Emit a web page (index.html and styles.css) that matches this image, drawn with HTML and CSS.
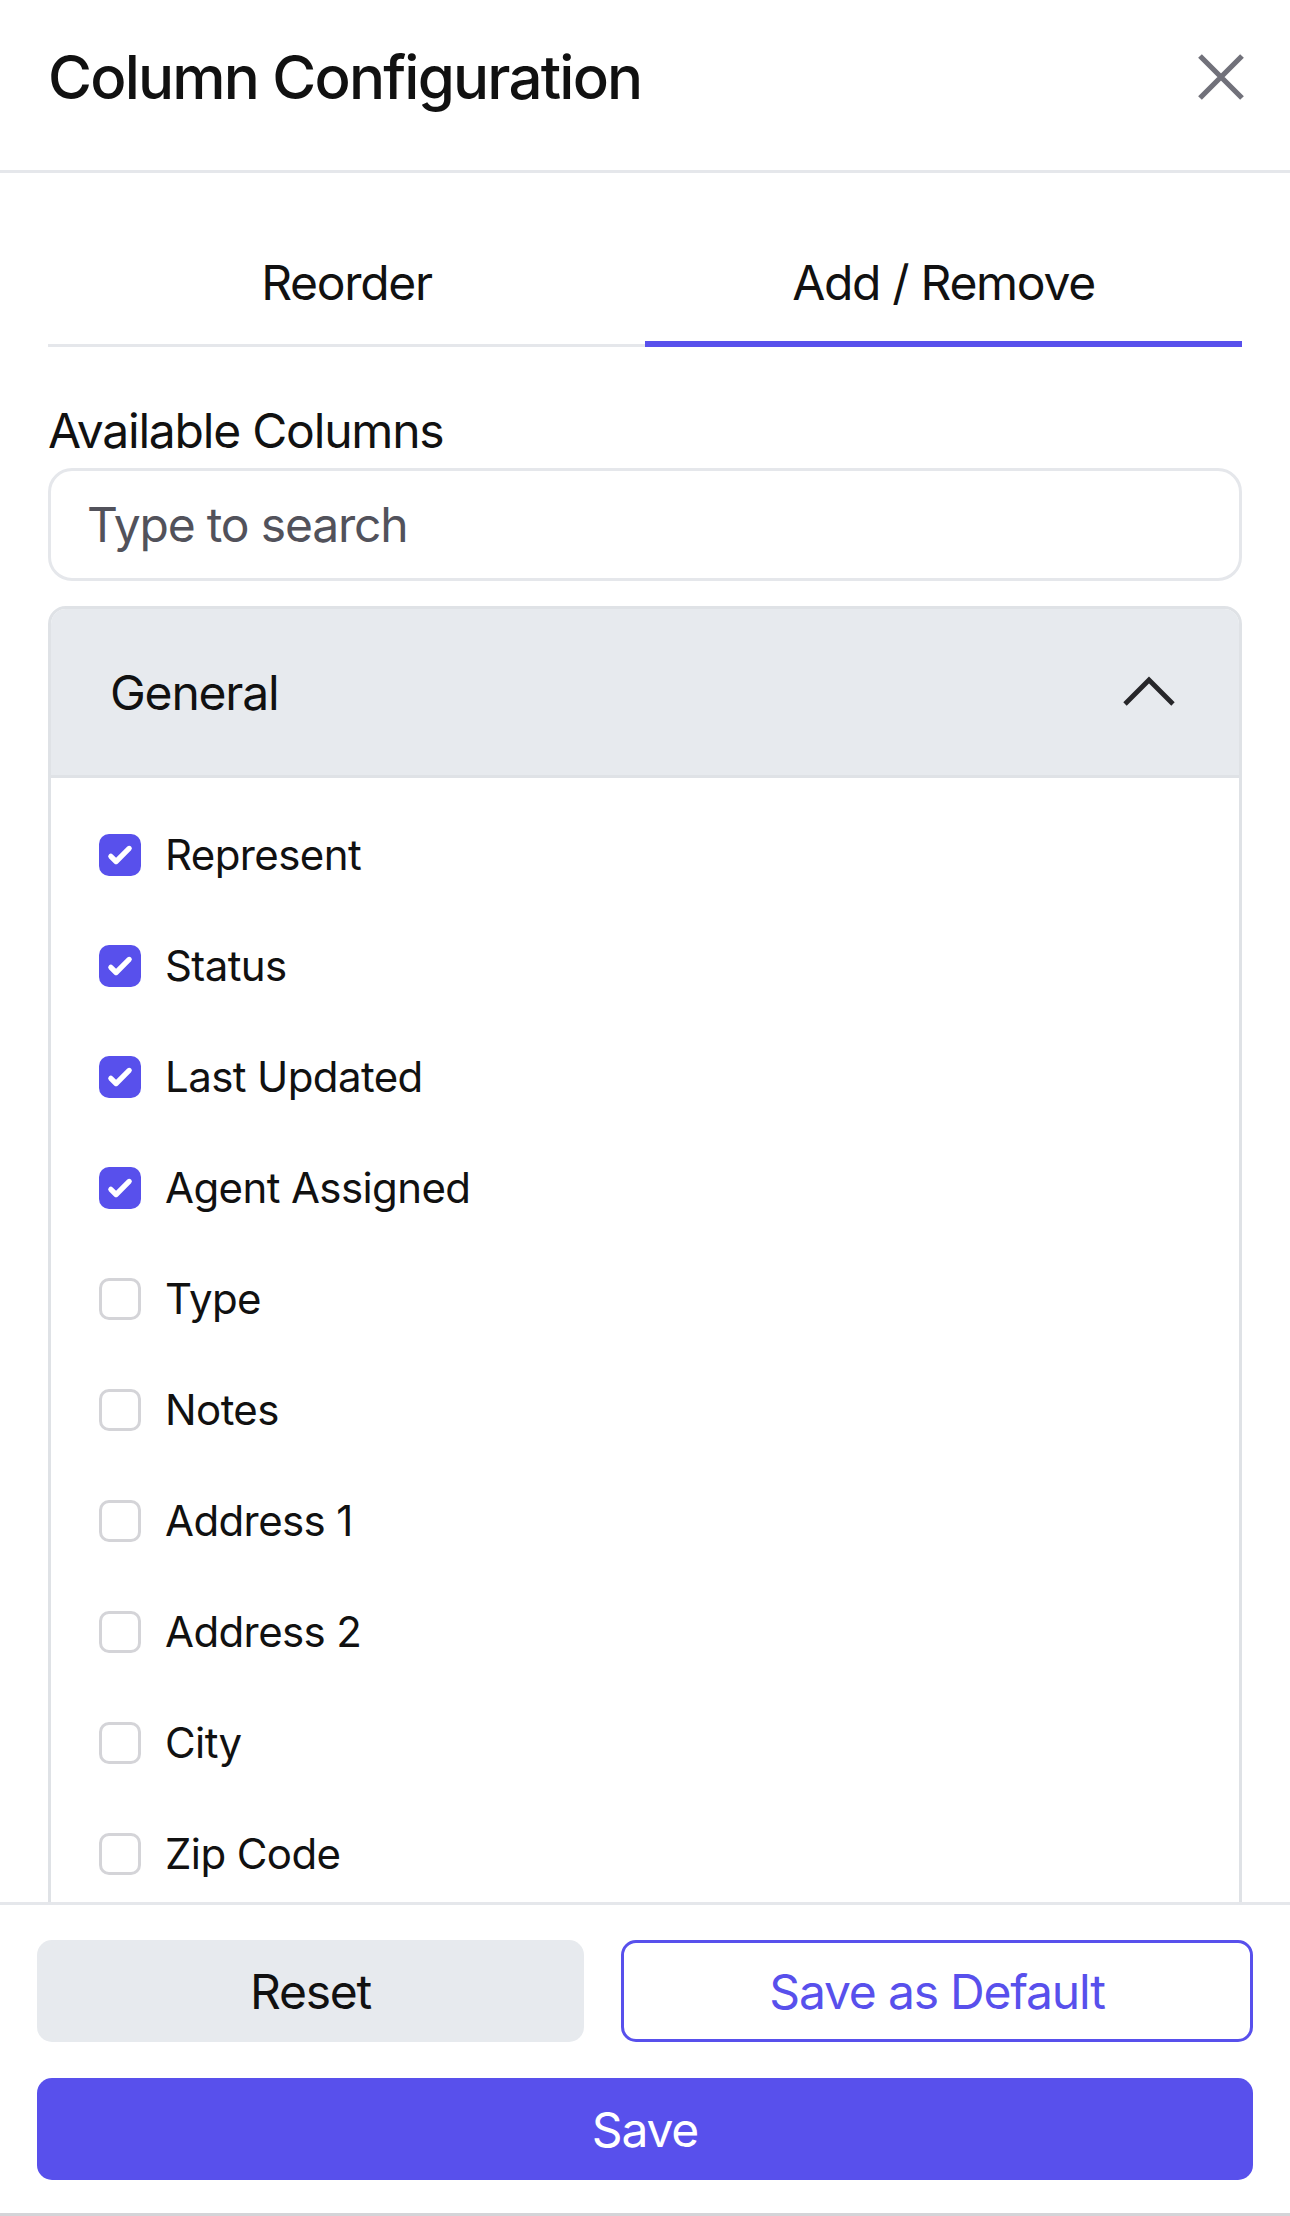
FILE: index.html
```html
<!DOCTYPE html>
<html lang="en">
<head>
    <meta charset="UTF-8">
    <meta name="viewport" content="width=device-width, initial-scale=1.0">
    <title>Column Configuration</title>
    <link rel="stylesheet" href="styles.css">
</head>
<body>
    <div class="panel">
        <!-- header -->
        <div class="panel-header">
            <h1 class="title">Column Configuration</h1>
            <button class="close-btn" aria-label="Close">
                <svg width="42" height="42" viewBox="6 6 12 12" fill="none" stroke="currentColor" stroke-width="1.5" overflow="visible">
                    <path d="M6 18L18 6M6 6l12 12"/>
                </svg>
            </button>
        </div>

        <!-- body -->
        <div class="panel-body">
            <div class="tabs">
                <button class="tab">Reorder</button>
                <button class="tab active">Add / Remove</button>
            </div>

            <div class="section-label">Available Columns</div>
            <input class="search" type="text" placeholder="Type to search">

            <div class="group">
                <div class="group-header">
                    <span>General</span>
                    <svg width="48" height="24" viewBox="4.5 8.25 15 7.5" fill="none" stroke="#27272a" stroke-width="1.5" overflow="visible">
                        <path d="M4.5 15.75l7.5-7.5 7.5 7.5"/>
                    </svg>
                </div>
                <ul class="options">
                    <li class="option"><span class="box checked"><svg viewBox="0 0 16 16" fill="#fff"><path d="M12.207 4.793a1 1 0 010 1.414l-5 5a1 1 0 01-1.414 0l-2-2a1 1 0 011.414-1.414L6.5 9.086l4.293-4.293a1 1 0 011.414 0z"/></svg></span>Represent</li>
                    <li class="option"><span class="box checked"><svg viewBox="0 0 16 16" fill="#fff"><path d="M12.207 4.793a1 1 0 010 1.414l-5 5a1 1 0 01-1.414 0l-2-2a1 1 0 011.414-1.414L6.5 9.086l4.293-4.293a1 1 0 011.414 0z"/></svg></span>Status</li>
                    <li class="option"><span class="box checked"><svg viewBox="0 0 16 16" fill="#fff"><path d="M12.207 4.793a1 1 0 010 1.414l-5 5a1 1 0 01-1.414 0l-2-2a1 1 0 011.414-1.414L6.5 9.086l4.293-4.293a1 1 0 011.414 0z"/></svg></span>Last Updated</li>
                    <li class="option"><span class="box checked"><svg viewBox="0 0 16 16" fill="#fff"><path d="M12.207 4.793a1 1 0 010 1.414l-5 5a1 1 0 01-1.414 0l-2-2a1 1 0 011.414-1.414L6.5 9.086l4.293-4.293a1 1 0 011.414 0z"/></svg></span>Agent Assigned</li>
                    <li class="option"><span class="box"></span>Type</li>
                    <li class="option"><span class="box"></span>Notes</li>
                    <li class="option"><span class="box"></span>Address 1</li>
                    <li class="option"><span class="box"></span>Address 2</li>
                    <li class="option"><span class="box"></span>City</li>
                    <li class="option"><span class="box"></span>Zip Code</li>
                </ul>
            </div>
        </div>

        <!-- footer -->
        <div class="panel-footer">
            <button class="btn btn-reset">Reset</button>
            <button class="btn btn-outline">Save as Default</button>
            <button class="btn btn-save">Save</button>
        </div>
    </div>
</body>
</html>
```

FILE: styles.css
```css
* {
    box-sizing: border-box;
}
body {
    margin: 0;
    font-family: Inter, "Noto Sans", sans-serif;
    color: #111;
    background: #fff;
}
.panel {
    width: 1290px;
    height: 2216px;
    display: flex;
    flex-direction: column;
    border-bottom: 3px solid #d4d4d8;
}
.panel-header {
    flex: none;
    height: 173px;
    display: flex;
    align-items: center;
    justify-content: space-between;
    padding: 0 48px 16px 48px;
    border-bottom: 3px solid #e5e7eb;
}
.title {
    margin: 0;
    font-size: 60px;
    font-weight: 500;
    line-height: 72px;
    letter-spacing: -1.8px;
}
.close-btn {
    border: none;
    background: none;
    padding: 0;
    width: 42px;
    height: 42px;
    color: #71717a;
}
.panel-body {
    flex: 1;
    overflow: hidden;
    padding: 57px 48px 0;
}
.tabs {
    display: flex;
}
.tab {
    flex: 1;
    font-family: inherit;
    font-size: 48px;
    line-height: 58px;
    letter-spacing: -1.3px;
    color: #111;
    background: none;
    border: none;
    border-bottom: 3px solid #e5e7eb;
    padding: 24px 0 32px;
}
.tab.active {
    padding-bottom: 29px;
    border-bottom: 6px solid #5850ec;
}
.section-label {
    margin: 55px 0 8px;
    font-size: 48px;
    line-height: 58px;
    letter-spacing: -1.2px;
}
.search {
    display: block;
    width: 100%;
    height: 113px;
    border: 3px solid #e5e7eb;
    border-radius: 24px;
    padding: 0 36px;
    font-family: inherit;
    font-size: 48px;
    letter-spacing: -1.2px;
    color: #111;
    outline: none;
}
.search::placeholder {
    color: #52525b;
}
.group {
    margin-top: 25px;
    border: 3px solid #dfe2e6;
    border-radius: 18px 18px 0 0;
}
.group-header {
    height: 169px;
    display: flex;
    align-items: center;
    justify-content: space-between;
    padding: 0 66px 0 59px;
    background: #e7eaee;
    border-bottom: 3px solid #dfe2e6;
    border-radius: 15px 15px 0 0;
    font-size: 48px;
    letter-spacing: -1.2px;
}
.options {
    list-style: none;
    margin: 0;
    padding: 21px 0 0 48px;
}
.option {
    height: 111px;
    display: flex;
    align-items: center;
    gap: 24px;
    font-size: 42px;
    letter-spacing: -0.6px;
}
.box {
    flex: none;
    width: 42px;
    height: 42px;
    border: 3px solid #d4d4d8;
    border-radius: 10px;
    background: #fff;
}
.box.checked {
    border: none;
    background: #5850ec;
}
.box svg {
    display: block;
    width: 42px;
    height: 42px;
}
.panel-footer {
    flex: none;
    display: grid;
    grid-template-columns: 547px 1fr;
    gap: 36px 37px;
    padding: 35px 37px 33px;
    border-top: 3px solid #e5e7eb;
}
.btn {
    height: 102px;
    border: none;
    border-radius: 15px;
    font-family: inherit;
    font-size: 48px;
    letter-spacing: -1.2px;
    cursor: pointer;
}
.btn-reset {
    background: #e7eaee;
    color: #111;
}
.btn-outline {
    background: #fff;
    border: 3px solid #5850ec;
    color: #5850ec;
}
.btn-save {
    grid-column: 1 / -1;
    background: #5850ec;
    color: #fff;
}
```
